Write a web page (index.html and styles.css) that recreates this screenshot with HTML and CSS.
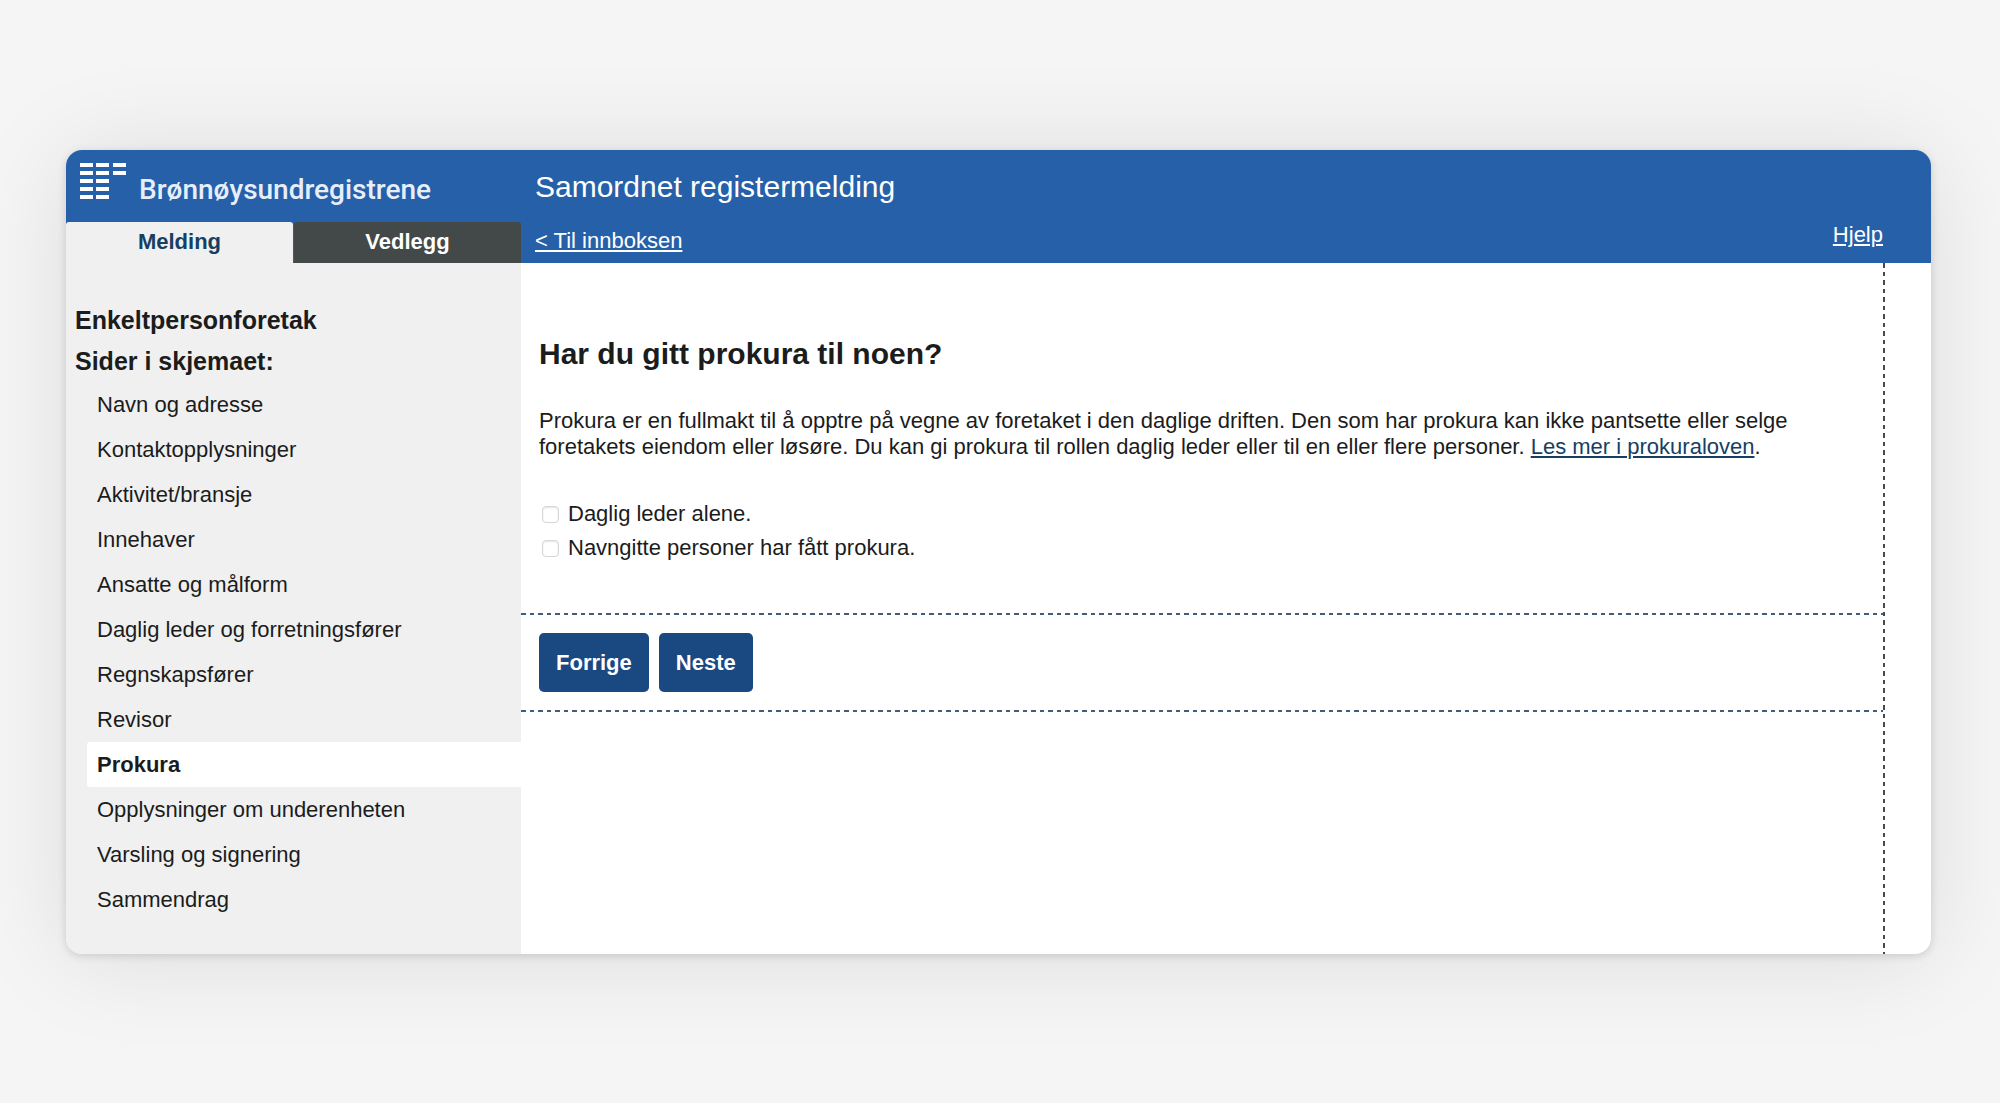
FILE: index.html
```html
<!DOCTYPE html>
<html lang="no">
<head>
<meta charset="utf-8">
<title>Samordnet registermelding</title>
<link rel="stylesheet" href="styles.css">
</head>
<body>
<div class="card">
  <header class="header">
    <div class="brand-column">
      <div class="brand">
        <svg class="brand-mark" width="46" height="37" viewBox="0 0 46 37" fill="#fff" aria-hidden="true">
          <path d="M0 0h13v4H0zM16 0h13v4H16zM33 0h13v4H33zM0 8h13v4H0zM16 8h13v4H16zM33 8h13v4H33zM0 16h13v4H0zM16 16h13v4H16zM0 24h13v4H0zM16 24h13v4H16zM0 32h13v4H0zM16 32h13v4H16z"/>
        </svg>
        <span class="brand-name">Brønnøysundregistrene</span>
      </div>
      <nav class="tabs" aria-label="Skjemadeler">
        <a class="tab tab-active" href="#melding">Melding</a>
        <a class="tab" href="#vedlegg">Vedlegg</a>
      </nav>
    </div>
    <div class="header-main">
      <p class="form-title">Samordnet registermelding</p>
      <div class="header-links">
        <a href="#innboks">&lt; Til innboksen</a>
        <a class="help" href="#hjelp">Hjelp</a>
      </div>
    </div>
  </header>
  <div class="body">
    <aside class="sidebar">
      <h2>Enkeltpersonforetak</h2>
      <h2>Sider i skjemaet:</h2>
      <ul class="pages">
        <li><a href="#navn">Navn og adresse</a></li>
        <li><a href="#kontakt">Kontaktopplysninger</a></li>
        <li><a href="#aktivitet">Aktivitet/bransje</a></li>
        <li><a href="#innehaver">Innehaver</a></li>
        <li><a href="#ansatte">Ansatte og målform</a></li>
        <li><a href="#leder">Daglig leder og forretningsfører</a></li>
        <li><a href="#regnskap">Regnskapsfører</a></li>
        <li><a href="#revisor">Revisor</a></li>
        <li><a class="current" href="#prokura" aria-current="page">Prokura</a></li>
        <li><a href="#underenhet">Opplysninger om underenheten</a></li>
        <li><a href="#varsling">Varsling og signering</a></li>
        <li><a href="#sammendrag">Sammendrag</a></li>
      </ul>
    </aside>
    <main class="content">
      <form>
        <section class="question">
          <h1>Har du gitt prokura til noen?</h1>
          <p>Prokura er en fullmakt til å opptre på vegne av foretaket i den daglige driften. Den som har prokura kan ikke pantsette eller selge foretakets eiendom eller løsøre. Du kan gi prokura til rollen daglig leder eller til en eller flere personer. <a href="#prokuraloven">Les mer i prokuraloven</a>.</p>
          <div class="options">
            <label class="option"><input type="checkbox" name="leder">Daglig leder alene.</label>
            <label class="option"><input type="checkbox" name="personer">Navngitte personer har fått prokura.</label>
          </div>
        </section>
        <div class="actions">
          <button type="button">Forrige</button>
          <button type="button">Neste</button>
        </div>
      </form>
    </main>
  </div>
</div>
</body>
</html>
```
FILE: styles.css
```css
* {
  box-sizing: border-box;
}

body {
  margin: 0;
  padding: 150px 69px 150px 66px;
  background: #f5f5f5;
  color: #1b1c1c;
  font: 22px/26px "Liberation Sans", Arial, sans-serif;
}

h1, h2, p, ul {
  margin: 0;
  padding: 0;
}

.card {
  overflow: hidden;
  border-radius: 16px;
  background: #fff;
  box-shadow: 0 2px 8px rgba(0, 0, 0, .14), 0 4px 100px rgba(0, 0, 0, .1);
}

.header {
  display: flex;
  background: #2660a9;
  color: #fff;
}

.header a {
  color: #fff;
}

.brand-column {
  flex: 0 0 455px;
  display: flex;
  flex-direction: column;
}

.brand {
  display: flex;
  height: 72px;
  padding: 13px 14px 0;
  gap: 13px;
}

.brand-name {
  padding-top: 9px;
  color: #e6eefa;
  font: 500 28px/36px Roboto, sans-serif;
}

.tabs {
  display: flex;
  gap: 1px;
}

.tabs .tab {
  flex: 1;
  height: 41px;
  padding-top: 7px;
  border-radius: 3px 3px 0 0;
  background: #434849;
  font-weight: bold;
  text-align: center;
  text-decoration: none;
}

.tabs .tab-active {
  background: #f0f0f0;
  color: #163f63;
}

.header-main {
  flex: 1;
  padding: 19px 48px 0 14px;
}

.form-title {
  font-size: 30px;
  line-height: 36px;
}

.header-links {
  display: flex;
  justify-content: space-between;
  padding-top: 18px;
  line-height: 36px;
}

.header-links a {
  text-decoration-thickness: 2px;
  text-underline-offset: 2px;
}

.header-links .help {
  line-height: 24px;
}

.body {
  display: flex;
}

.sidebar {
  flex: 0 0 455px;
  padding: 37px 0 32px 9px;
  background: #f0f0f0;
}

.sidebar h2 {
  font-size: 25px;
  line-height: 41px;
}

.pages {
  padding-left: 12px;
  list-style: none;
}

.pages a {
  display: block;
  padding-left: 10px;
  border-radius: 3px 0 0 3px;
  color: inherit;
  line-height: 45px;
  text-decoration: none;
}

.pages .current {
  background: #fff;
  font-weight: bold;
}

.content {
  flex: 1;
  margin-right: 46px;
  background: repeating-linear-gradient(#4a4a4a 0 5px, transparent 5px 9px, #4a4a4a 9px 13px, transparent 13px 17px) right / 2px 100% no-repeat;
}

.question {
  padding: 73px 30px 48px 18px;
}

h1 {
  font-size: 30px;
  line-height: 36px;
}

.question p {
  padding-top: 36px;
}

.question a {
  color: #163f63;
  text-decoration-thickness: 2px;
  text-underline-offset: 2px;
}

.options {
  padding-top: 37px;
}

.option {
  display: flex;
  align-items: center;
  gap: 9px;
  height: 34px;
}

.option input {
  appearance: none;
  width: 17px;
  height: 17px;
  margin: 0 0 0 3px;
  border: 1px solid #d6d6d6;
  border-radius: 4px;
  background: #fff;
  box-shadow: inset 0 1px 2px rgba(0, 0, 0, .1);
}

.actions {
  --dashes: repeating-linear-gradient(90deg, #3d6080 0 5px, transparent 5px 9px, #3d6080 9px 13px, transparent 13px 17px);
  display: flex;
  gap: 10px;
  margin-right: 2px;
  padding: 20px 18px;
  background: var(--dashes) top / 100% 2px no-repeat, var(--dashes) bottom / 100% 2px no-repeat;
}

.actions button {
  height: 59px;
  padding: 0 17px;
  border: 0;
  border-radius: 5px;
  background: #1a4881;
  color: #fff;
  font: bold 22px/26px "Liberation Sans", Arial, sans-serif;
}
```
